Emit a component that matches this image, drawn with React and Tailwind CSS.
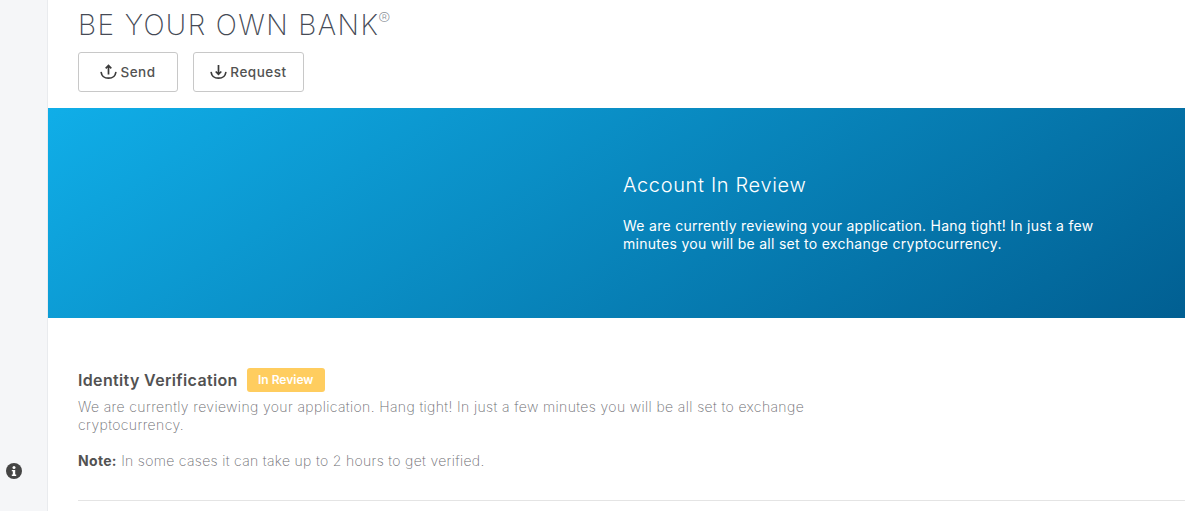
const font = "font-['Inter','Liberation_Sans',sans-serif]";

function SendIcon({down}) {
    return <svg width="17" height="17" viewBox="0 0 17 17" fill="none" stroke="#3a3a3a" strokeWidth="1.7">
        <path d="M1.200 8.500c.5 3.500 3.400 5.700 7.300 5.700s6.800-2.200 7.300-5.700" strokeLinecap="round"/>
        {down
            ? <path d="M8.500 1v9.500M5.700 7.500l2.800 2.800 2.800-2.800"/>
            : <path d="M8.500 10.500V1.500M5.700 4.300l2.800-2.800 2.800 2.800"/>}
    </svg>
}

function ActionButton({label, down, width}) {
    return <button className={`flex h-10 items-center justify-center gap-[3px] rounded-[3px] border border-[#c8c8c8] bg-white text-[13.5px] font-medium tracking-[0.5px] text-[#525252] ${width}`}>
        <SendIcon down={down}/>
        {label}
    </button>
}

function App() {
    return <div className={`flex h-[511px] w-[1185px] overflow-hidden bg-white ${font}`}>
        <div className="flex w-12 shrink-0 flex-col items-start border-r border-[#e9ebee] bg-[#f5f6f8] pl-[6px] pt-[463px]">
            <svg width="16" height="16" viewBox="0 0 16 16">
                <circle cx="8" cy="8" r="8" fill="#454545"/>
                <circle cx="8" cy="4.400" r="1.500" fill="#fff"/>
                <path d="M5.800 7h3.400v4.600h1v1.300H5.800v-1.300h1V8.300H5.800z" fill="#fff"/>
            </svg>
        </div>

        <div className="flex min-w-0 flex-1 flex-col">
            <div className="h-[108px] pl-[30px] pt-[7px]">
                <h1 className="flex h-9 items-start text-[28px] font-extralight leading-9 tracking-[1.4px] text-[#454a55]">
                    BE YOUR OWN BANK
                    <span className="-ml-[1px] text-[18px] font-extralight leading-6 tracking-normal text-[#8a8f98]">®</span>
                </h1>
                <div className="mt-[9px] flex gap-[15px]">
                    <ActionButton label="Send" width="w-[100px]"/>
                    <ActionButton label="Request" down width="w-[111px]"/>
                </div>
            </div>

            <div className="flex h-[210px] bg-[linear-gradient(147deg,#10aee8,#015f92)] pl-[575px] pt-[65px] text-white">
                <div>
                    <h2 className="text-[20px] font-light leading-6 tracking-[0.65px]">Account In Review</h2>
                    <p className="mt-[20px] w-[490px] text-[14px] font-normal leading-[18px] tracking-[0.28px]">
                        We are currently reviewing your application. Hang tight! In just a few minutes you will be all set to exchange cryptocurrency.
                    </p>
                </div>
            </div>

            <div className="pl-[30px] pt-[50px]">
                <div className="flex items-center gap-[9px]">
                    <h3 className="text-[16px] font-semibold leading-6 tracking-[0.35px] text-[#525252]">Identity Verification</h3>
                    <span className="flex h-6 w-[78px] items-center justify-center rounded-[3px] bg-[#ffcd5f] text-[12px] font-semibold text-white">In Review</span>
                </div>
                <p className="mt-[6px] w-[750px] text-[14px] font-extralight leading-[18px] tracking-[0.38px] text-[#6e6e73]">
                    We are currently reviewing your application. Hang tight! In just a few minutes you will be all set to exchange cryptocurrency.
                </p>
                <p className="mt-[18px] text-[14px] font-extralight leading-[18px] tracking-[0.32px] text-[#6e6e73]">
                    <b className="font-bold text-[#525252]">Note:</b> In some cases it can take up to 2 hours to get verified.
                </p>
                <div className="mt-[30px] h-px bg-[#e4e4e4]"/>
            </div>
        </div>
    </div>
}

export default App;
